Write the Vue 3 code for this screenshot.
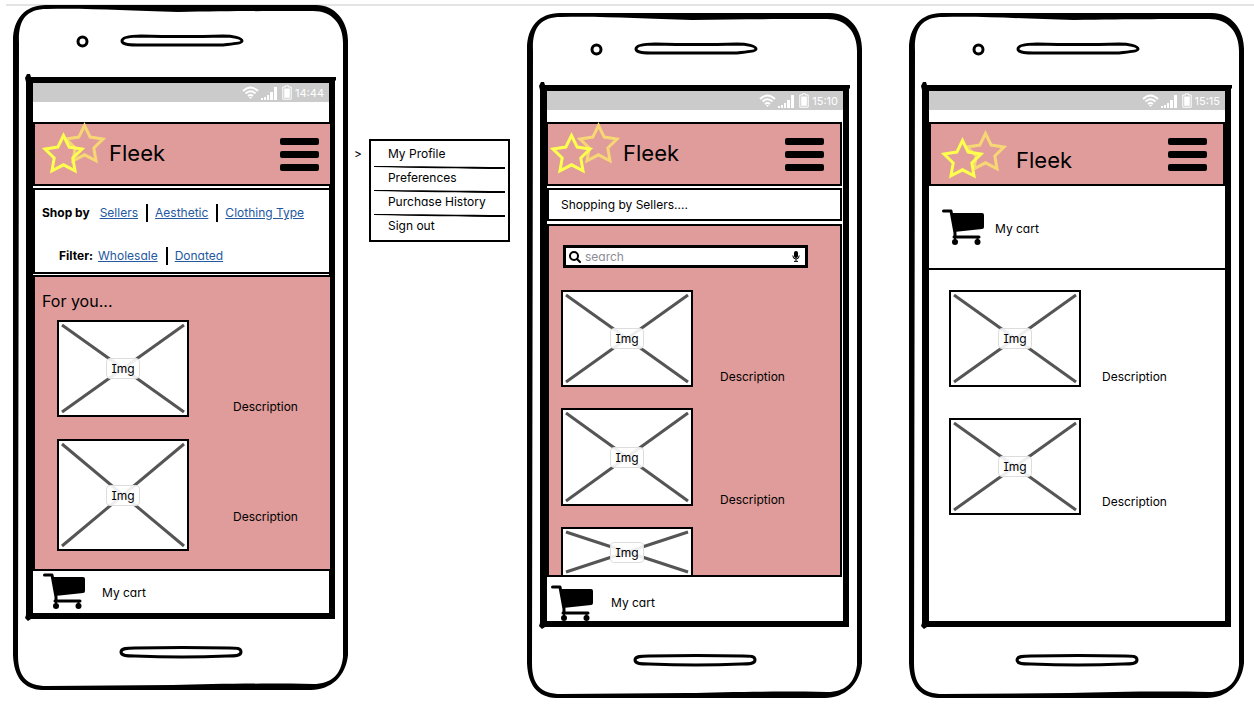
<script setup>
const phones = [
  {
    id: 'home',
    time: '14:44',
    star: { dx: 21, dy: 10 },
    items: [
      { height: 97, drop: 81 },
      { height: 112, drop: 72 },
    ],
  },
  {
    id: 'sellers',
    time: '15:10',
    star: { dx: 27, dy: 10 },
    items: [
      { height: 97, drop: 81 },
      { height: 98, drop: 86 },
      { height: 48 },
    ],
  },
  {
    id: 'cart',
    time: '15:15',
    star: { dx: 23, dy: 7 },
    items: [
      { height: 97, drop: 81 },
      { height: 97, drop: 78 },
    ],
  },
]

const menu = ['My Profile', 'Preferences', 'Purchase History', 'Sign out']
const shopBy = ['Sellers', 'Aesthetic', 'Clothing Type']
const filters = ['Wholesale', 'Donated']
const starPath =
  'M20.5 2.5 26.2 14.1 39 16 29.8 25 32 37.8 20.5 31.8 9 37.8 11.2 25 2 16 14.8 14.1Z'
</script>

<template>
  <main class="page">
    <hr class="rule" />
    <div class="board">
      <template v-for="phone in phones" :key="phone.id">
        <section class="phone" :class="phone.id">
          <svg class="shell" viewBox="0 0 335 685" preserveAspectRatio="none" aria-hidden="true">
            <path
              fill-rule="evenodd"
              d="M0 36C0 14 12 0 33 0H303C322 0 335 16 335 36V650C333 671 318 685 298 685H34C12 686 1 674 0 650ZM6 38C5 15 13 4 34 4C80 3 115 6 165 7C220 6 270 6 300 6C319 6 330 19 330 38V652C328 670 318 679 300 679C250 678 200 679 160 680L34 681C14 681 5 672 5 650Z"
            />
            <path
              fill-rule="evenodd"
              d="M12 73 14 69 17 69 18 72H323V75L322 76V614H18L15 616 12 613 13 610V77ZM20 78V608H316V78Z"
            />
            <g fill="#fff" stroke="#000" stroke-width="3">
              <ellipse cx="69.500" cy="36.500" rx="4.500" ry="4.500" />
              <path
                d="M109 36C109 32 118 31 128 31Q170 32 210 31C220 31 229 33 229 36C229 38 220 39 210 40Q170 40 128 40C118 40 109 40 109 36Z"
              />
              <path
                d="M108 647C108 643 114 643 122 643Q170 642 216 643C224 643 228 643 228 647C228 651 222 651 214 651Q170 653 122 651C114 651 108 651 108 647Z"
              />
            </g>
          </svg>

          <div class="screen">
            <div class="status">
              <svg width="17" height="13" viewBox="0 0 17 13" fill="none" stroke="#fff" stroke-width="2">
                <path d="M1 5Q8.500 -2 16 5M3.500 7.500Q8.500 3 13.500 7.500M6 10Q8.500 8 11 10" />
                <path d="M7 11H10L8.500 13Z" fill="#fff" stroke="none" />
              </svg>
              <svg width="16" height="14" viewBox="0 0 16 14" fill="#fff">
                <path d="M0 12h2v2H0zM3 11h2v3H3zM6 9h2v5H6zM9 6h3v8H9zM13 1h3v13h-3z" />
              </svg>
              <svg class="battery" width="10" height="15" viewBox="0 0 10 15">
                <path d="M3.500 .8H6.500V2H9.200V14.200H.8V2H3.500Z" fill="none" stroke="#fff" stroke-width="1" />
                <path d="M2.200 3.500H7.800V12.800H2.200Z" fill="#fff" />
              </svg>
              <time>{{ phone.time }}</time>
            </div>

            <header class="bar">
              <svg
                class="stars"
                :width="41 + phone.star.dx"
                :height="40 + phone.star.dy"
                fill="none"
                stroke-width="3"
                aria-hidden="true"
              >
                <path :d="starPath" stroke="#f7d774" :transform="`translate(${phone.star.dx} 0)`" />
                <path :d="starPath" stroke="#ffff4d" :transform="`translate(0 ${phone.star.dy})`" />
              </svg>
              <h1 class="brand">Fleek</h1>
              <button class="burger" type="button" aria-label="Menu">
                <svg width="39" height="33" viewBox="0 0 39 33">
                  <rect width="39" height="7" rx="2" />
                  <rect y="13" width="39" height="7" rx="2" />
                  <rect y="26" width="39" height="7" rx="2" />
                </svg>
              </button>
            </header>

            <nav v-if="phone.id === 'home'" class="filters">
              <div class="links">
                <b>Shop by</b>
                <ul>
                  <li v-for="label in shopBy" :key="label"><a href="#">{{ label }}</a></li>
                </ul>
              </div>
              <div class="links second">
                <b>Filter:</b>
                <ul>
                  <li v-for="label in filters" :key="label"><a href="#">{{ label }}</a></li>
                </ul>
              </div>
            </nav>
            <p v-if="phone.id === 'sellers'" class="crumb">Shopping by Sellers....</p>

            <a href="#" class="cart-link">
              <svg width="43" height="36" viewBox="0 0 43 36" aria-hidden="true">
                <path d="M1.500 2H9L13 24V28" fill="none" stroke="#000" stroke-width="3" stroke-linecap="round" stroke-linejoin="round" />
                <path d="M9 4H40Q42 4 42 6V18Q42 20 40 20L12 23Z" />
                <path d="M12 28H37" stroke="#000" stroke-width="3" stroke-linecap="round" />
                <circle cx="13" cy="33" r="3" />
                <circle cx="35.500" cy="33" r="3" />
                <path d="M13 28V33M35.500 28V33" stroke="#000" stroke-width="2" />
              </svg>
              <span>My cart</span>
            </a>

            <div class="feed">
              <h2 v-if="phone.id === 'home'">For you...</h2>
              <label v-if="phone.id === 'sellers'" class="search">
                <svg width="12" height="12" viewBox="0 0 12 12" fill="none" stroke="#000" stroke-width="2">
                  <circle cx="5" cy="5" r="4" />
                  <path d="M8 8 11 11" stroke-linecap="round" />
                </svg>
                <input type="search" placeholder="search" aria-label="search" />
                <svg width="8" height="11" viewBox="0 0 8 11">
                  <rect x="2" width="4" height="7" rx="2" />
                  <path d="M.8 4.500Q.8 8 4 8T7.200 4.500M4 8V10M2 10.400H6" fill="none" stroke="#000" />
                </svg>
              </label>
              <ul class="items">
                <li v-for="(item, i) in phone.items" :key="i">
                  <div class="picture" :style="{ height: item.height + 'px' }">
                    <svg aria-hidden="true">
                      <line x1="0" y1="0" x2="100%" y2="100%" />
                      <line x1="100%" y1="0" x2="0" y2="100%" />
                    </svg>
                    <span>Img</span>
                  </div>
                  <p v-if="item.drop" :style="{ marginTop: item.drop + 'px' }">Description</p>
                </li>
              </ul>
            </div>
          </div>
        </section>

        <aside v-if="phone.id === 'home'" class="popout">
          <span class="arrow">&gt;</span>
          <ul class="menu">
            <li v-for="(label, i) in menu" :key="label">
              <svg v-if="i" viewBox="0 0 131 3" preserveAspectRatio="none" aria-hidden="true">
                <path d="M0 0C40 0 90 1 131 1V3C90 3 40 2 0 1Z" />
              </svg>
              <a href="#">{{ label }}</a>
            </li>
          </ul>
        </aside>
      </template>
    </div>
  </main>
</template>

<style>
body {
  margin: 0;
  background: #fff;
}
</style>

<style scoped>
.page {
  font-family: Inter, "Open Sans", sans-serif;
  font-feature-settings: "cv11", "cv08";
  font-size: 12px;
  line-height: 16px;
  color: #000;
  padding: 4px 0 8px;
}
.page * {
  box-sizing: border-box;
}
ul, p, h1, h2 {
  margin: 0;
  padding: 0;
  list-style: none;
}
svg {
  display: block;
  flex: none;
}
.rule {
  height: 2px;
  margin: 0 0 0 6px;
  border: 0;
  background: #e4e4e4;
}
.board {
  display: grid;
  grid-template-columns: 1fr 179px 1fr 47px 1fr;
  align-items: start;
  padding: 0 10px 0 13px;
  margin-top: -1px;
}
.phone {
  position: relative;
  padding: 78px 19px 77px 20px;
}
.sellers,
.cart {
  margin-top: 8px;
}
.cart {
  grid-column: 5;
}
.shell {
  position: absolute;
  inset: 0;
  width: 100%;
  height: 100%;
}
.screen {
  position: relative;
  display: flex;
  flex-direction: column;
  min-height: 530px;
}

.status {
  display: flex;
  align-items: center;
  justify-content: flex-end;
  gap: 5px;
  height: 19px;
  padding-right: 5px;
  margin-bottom: 12px;
  background: #cbcbcb;
  color: #fff;
  font-size: 11px;
}
.status svg:first-child {
  margin-right: -3px;
}
.status .battery {
  margin-right: -2px;
}
.home .status {
  margin-bottom: 20px;
}

.bar {
  display: flex;
  align-items: flex-start;
  height: 64px;
  padding: 0 16px 0 3px;
  border: 2px solid #000;
  background: #df9c9a;
}
.home .bar {
  margin-right: -3px;
  padding: 0 11px 0 8px;
}
.sellers .bar {
  margin: 0 1px 0 -1px;
}
.cart .bar {
  padding: 8px 16px 0 11px;
}
.stars {
  margin-top: -1px;
  overflow: visible;
}
.brand {
  margin: 17px auto 0 4px;
  font-size: 22px;
  line-height: 24px;
  font-weight: 400;
}
.cart .brand {
  margin-top: 16px;
  margin-left: 10px;
}
.burger {
  align-self: center;
  margin-top: 1px;
  padding: 0;
  border: 0;
  background: none;
}
.cart .burger {
  margin-top: -7px;
}

.filters {
  margin: 2px -3px 1px 0;
  padding: 14px 7px 7px;
  border: 2px solid #000;
}
.links {
  display: flex;
  align-items: center;
  gap: 10px;
  height: 18px;
}
.second {
  margin: 25px 0 0 17px;
  gap: 5px;
}
.links ul {
  display: flex;
}
.links li + li {
  margin-left: 8px;
  padding-left: 7px;
  border-left: 2px solid #000;
}
.links li {
  line-height: 18px;
}
.links a {
  color: #2458a0;
}

.crumb {
  margin: 2px 1px 3px 0;
  padding: 7px 12px;
  border: 2px solid #000;
  line-height: 15px;
}

.cart-link {
  order: 2;
  display: flex;
  gap: 16px;
  padding: 2px 10px 4px;
  color: #000;
  text-decoration: none;
}
.cart-link span {
  margin-top: 12px;
}
.sellers .cart-link {
  padding: 8px 4px 0;
  gap: 17px;
}
.sellers .cart-link span {
  margin-top: 10px;
}
.cart .cart-link {
  order: 0;
  padding: 23px 13px 23px;
  gap: 10px;
  border-bottom: 2px solid #000;
}

.feed {
  flex: 1;
  margin-right: 1px;
  padding: 18px 12px 0;
  border: 2px solid #000;
  background: #df9c9a;
}
.home .feed {
  margin-right: -3px;
  padding: 14px 7px 18px;
}
.cart .feed {
  order: 1;
  padding: 20px 20px 0;
  border: 0;
  background: none;
}
.feed h2 {
  margin-bottom: 9px;
  font-size: 16px;
  line-height: 20px;
  font-weight: 400;
}
.search {
  display: flex;
  align-items: center;
  gap: 4px;
  height: 23px;
  margin: 1px 20px 22px 2px;
  padding: 0 5px 0 3px;
  border: 3px solid #000;
  background: #fff;
}
.search input {
  flex: 1;
  min-width: 0;
  padding: 0;
  border: 0;
  background: none;
  font: inherit;
  font-feature-settings: inherit;
  line-height: 16px;
}
.search input::placeholder {
  color: #8c8c94;
}
.items {
  display: grid;
  row-gap: 21px;
}
.home .items {
  padding-left: 15px;
  row-gap: 22px;
}
.cart .items {
  row-gap: 31px;
}
.items li {
  display: flex;
  align-items: flex-start;
  gap: 27px;
}
.home .items li {
  gap: 44px;
}
.cart .items li {
  gap: 21px;
}
.items p {
  line-height: 12px;
}
.picture {
  display: grid;
  place-items: center;
  flex: none;
  width: 132px;
  padding: 3px;
  border: 2px solid #000;
  background: #fff;
}
.picture > * {
  grid-area: 1 / 1;
}
.picture svg {
  width: 100%;
  height: 100%;
  overflow: visible;
  stroke: #555;
  stroke-width: 3;
  min-height: 0;
}
.picture span {
  position: relative;
  padding: 1px 4px;
  border: 1px solid #ddd;
  border-radius: 4px;
  background: rgba(255, 255, 255, 0.9);
  line-height: 17px;
}
.sellers .items li:last-child .picture {
  border-bottom: 0;
}

.popout {
  display: flex;
  align-items: flex-start;
  gap: 7px;
  margin: 134px 17px 0 6px;
}
.arrow {
  margin-top: 7px;
}
.menu {
  flex: 1;
  border: 2px solid #000;
  padding: 0 3px 2px;
}
.menu li {
  height: 24px;
}
.menu li:first-child {
  padding-top: 2px;
}
.menu svg {
  width: 100%;
  height: 3px;
}
.menu a {
  display: block;
  padding: 3px 0 4px 14px;
  color: #000;
  text-decoration: none;
}
.menu li + li a {
  padding-top: 1px;
}
.menu li:first-child {
  height: 25px;
}
</style>
